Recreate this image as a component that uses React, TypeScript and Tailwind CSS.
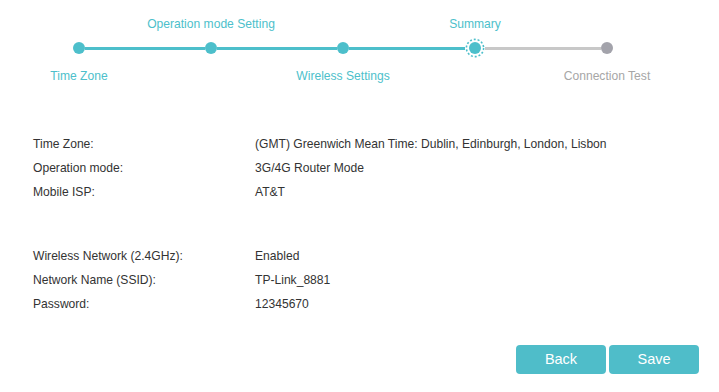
const teal = "#4dbfcb";

type Step = { name: string; pos: "top" | "bottom" };

const steps: Step[] = [
  { name: "Time Zone", pos: "bottom" },
  { name: "Operation mode Setting", pos: "top" },
  { name: "Wireless Settings", pos: "bottom" },
  { name: "Summary", pos: "top" },
  { name: "Connection Test", pos: "bottom" },
];

const active = 3;

const summary = [
  [
    ["Time Zone:", "(GMT) Greenwich Mean Time: Dublin, Edinburgh, London, Lisbon"],
    ["Operation mode:", "3G/4G Router Mode"],
    ["Mobile ISP:", "AT&T"],
  ],
  [
    ["Wireless Network (2.4GHz):", "Enabled"],
    ["Network Name (SSID):", "TP-Link_8881"],
    ["Password:", "12345670"],
  ],
];

function StepDot({ state }: { state: "done" | "active" | "todo" }) {
  if (state === "active") {
    return (
      <svg width="20" height="20" viewBox="0 0 20 20" className="shrink-0">
        <circle cx="10" cy="10" r="8.6" fill="none" stroke={teal} strokeWidth="1.6" strokeDasharray="2 1.9" />
        <circle cx="10" cy="10" r="6" fill={teal} />
      </svg>
    );
  }
  return (
    <div
      className={
        "w-[12px] h-[12px] rounded-full shrink-0 " +
        (state === "done" ? "bg-[#4dbfcb]" : "bg-[#a3a3ab]")
      }
    />
  );
}

export default function App() {
  return (
    <div
      className="w-[719px] h-[392px] bg-white text-[12.1px] text-[#333333] overflow-hidden"
      style={{ fontFamily: '"Liberation Sans", Arial, sans-serif' }}
    >
      <div className="flex pl-[13px] pt-[16px]">
        {steps.map((s, i) => {
          const state = i < active ? "done" : i === active ? "active" : "todo";
          const labelColor = i <= active ? "text-[#4dbfcb]" : "text-[#a6a6a6]";
          return (
            <div key={s.name} className="w-[132px] flex flex-col items-center">
              <div className={"h-[16px] leading-[16px] whitespace-nowrap " + labelColor}>
                {s.pos === "top" ? s.name : ""}
              </div>
              <div className="w-full h-[20px] mt-[6px] flex items-center">
                <div
                  className={
                    "flex-1 h-[3px] " +
                    (i === 0 ? "" : i <= active ? "bg-[#4dbfcb]" : "bg-[#c8c8c8]")
                  }
                />
                <StepDot state={state} />
                <div
                  className={
                    "flex-1 h-[3px] " +
                    (i === steps.length - 1 ? "" : i < active ? "bg-[#4dbfcb]" : "bg-[#c8c8c8]")
                  }
                />
              </div>
              <div className={"h-[16px] leading-[16px] mt-[10px] whitespace-nowrap " + labelColor}>
                {s.pos === "bottom" ? s.name : ""}
              </div>
            </div>
          );
        })}
      </div>

      <div className="pl-[33px] mt-[48px] flex flex-col gap-[40px]">
        {summary.map((group, gi) => (
          <div key={gi}>
            {group.map(([label, value]) => (
              <div key={label} className="flex h-[24px] items-center">
                <div className="w-[222px]">{label}</div>
                <div>{value}</div>
              </div>
            ))}
          </div>
        ))}
      </div>

      <div className="flex justify-end gap-[3px] pr-[20px] mt-[29px]">
        <button className="w-[90px] h-[29px] rounded-[4px] bg-[#4fbdc9] text-white text-[14.5px]">
          Back
        </button>
        <button className="w-[90px] h-[29px] rounded-[4px] bg-[#4fbdc9] text-white text-[14.5px]">
          Save
        </button>
      </div>
    </div>
  );
}
